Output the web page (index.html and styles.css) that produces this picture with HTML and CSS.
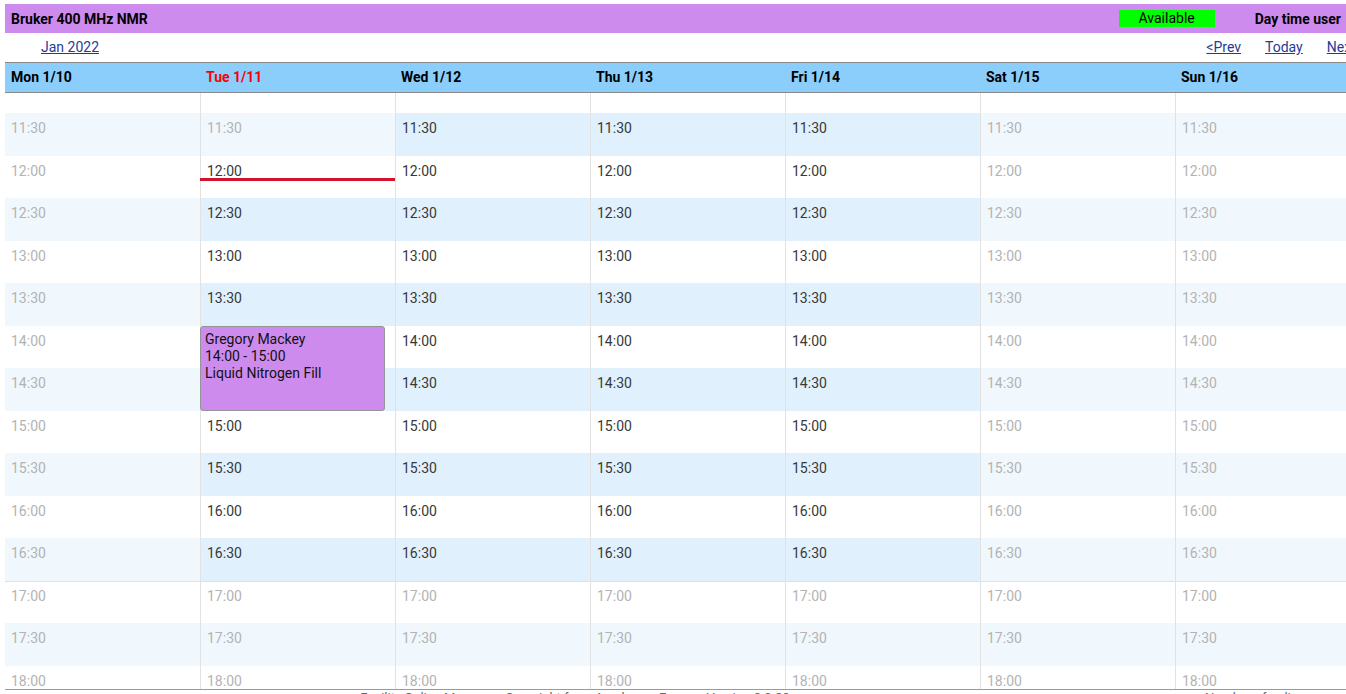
FILE: index.html
```html
<!DOCTYPE html>
<html>
<head>
<meta charset="utf-8">
<title>Bruker 400 MHz NMR</title>
<link rel="stylesheet" href="styles.css">
</head>
<body>
<div class="page">
  <div class="topbar">
    <div class="title">Bruker 400 MHz NMR</div>
    <div class="status">Available</div>
    <div class="usertype">Day time user</div>
  </div>
  <div class="nav">
    <a href="#" class="month">Jan 2022</a>
    <div class="navlinks">
      <a href="#">&lt;Prev</a>
      <a href="#">Today</a>
      <a href="#">Next&gt;</a>
    </div>
  </div>
  <div class="dayheads">
    <div class="dayhead">Mon 1/10</div>
    <div class="dayhead today">Tue 1/11</div>
    <div class="dayhead">Wed 1/12</div>
    <div class="dayhead">Thu 1/13</div>
    <div class="dayhead">Fri 1/14</div>
    <div class="dayhead">Sat 1/15</div>
    <div class="dayhead">Sun 1/16</div>
  </div>
  <div class="grid">
    <!-- Mon -->
    <div class="col first">
      <div class="slot tail"></div>
      <div class="slot half off">11:30</div>
      <div class="slot off">12:00</div>
      <div class="slot half off">12:30</div>
      <div class="slot off">13:00</div>
      <div class="slot half off">13:30</div>
      <div class="slot off">14:00</div>
      <div class="slot half off">14:30</div>
      <div class="slot off">15:00</div>
      <div class="slot half off">15:30</div>
      <div class="slot off">16:00</div>
      <div class="slot half off">16:30</div>
      <div class="slot off sep">17:00</div>
      <div class="slot half off">17:30</div>
      <div class="slot off">18:00</div>
    </div>
    <!-- Tue -->
    <div class="col">
      <div class="slot tail"></div>
      <div class="slot half off">11:30</div>
      <div class="slot on">12:00</div>
      <div class="slot half on">12:30</div>
      <div class="slot on">13:00</div>
      <div class="slot half on">13:30</div>
      <div class="slot on">14:00</div>
      <div class="slot half on">14:30</div>
      <div class="slot on">15:00</div>
      <div class="slot half on">15:30</div>
      <div class="slot on">16:00</div>
      <div class="slot half on">16:30</div>
      <div class="slot off sep">17:00</div>
      <div class="slot half off">17:30</div>
      <div class="slot off">18:00</div>
      <div class="nowline"></div>
      <div class="event">
        <div class="evline">Gregory Mackey</div>
        <div class="evline">14:00 - 15:00</div>
        <div class="evline">Liquid Nitrogen Fill</div>
      </div>
    </div>
    <!-- Wed -->
    <div class="col">
      <div class="slot tail"></div>
      <div class="slot half on">11:30</div>
      <div class="slot on">12:00</div>
      <div class="slot half on">12:30</div>
      <div class="slot on">13:00</div>
      <div class="slot half on">13:30</div>
      <div class="slot on">14:00</div>
      <div class="slot half on">14:30</div>
      <div class="slot on">15:00</div>
      <div class="slot half on">15:30</div>
      <div class="slot on">16:00</div>
      <div class="slot half on">16:30</div>
      <div class="slot off sep">17:00</div>
      <div class="slot half off">17:30</div>
      <div class="slot off">18:00</div>
    </div>
    <!-- Thu -->
    <div class="col">
      <div class="slot tail"></div>
      <div class="slot half on">11:30</div>
      <div class="slot on">12:00</div>
      <div class="slot half on">12:30</div>
      <div class="slot on">13:00</div>
      <div class="slot half on">13:30</div>
      <div class="slot on">14:00</div>
      <div class="slot half on">14:30</div>
      <div class="slot on">15:00</div>
      <div class="slot half on">15:30</div>
      <div class="slot on">16:00</div>
      <div class="slot half on">16:30</div>
      <div class="slot off sep">17:00</div>
      <div class="slot half off">17:30</div>
      <div class="slot off">18:00</div>
    </div>
    <!-- Fri -->
    <div class="col">
      <div class="slot tail"></div>
      <div class="slot half on">11:30</div>
      <div class="slot on">12:00</div>
      <div class="slot half on">12:30</div>
      <div class="slot on">13:00</div>
      <div class="slot half on">13:30</div>
      <div class="slot on">14:00</div>
      <div class="slot half on">14:30</div>
      <div class="slot on">15:00</div>
      <div class="slot half on">15:30</div>
      <div class="slot on">16:00</div>
      <div class="slot half on">16:30</div>
      <div class="slot off sep">17:00</div>
      <div class="slot half off">17:30</div>
      <div class="slot off">18:00</div>
    </div>
    <!-- Sat -->
    <div class="col">
      <div class="slot tail"></div>
      <div class="slot half off">11:30</div>
      <div class="slot off">12:00</div>
      <div class="slot half off">12:30</div>
      <div class="slot off">13:00</div>
      <div class="slot half off">13:30</div>
      <div class="slot off">14:00</div>
      <div class="slot half off">14:30</div>
      <div class="slot off">15:00</div>
      <div class="slot half off">15:30</div>
      <div class="slot off">16:00</div>
      <div class="slot half off">16:30</div>
      <div class="slot off sep">17:00</div>
      <div class="slot half off">17:30</div>
      <div class="slot off">18:00</div>
    </div>
    <!-- Sun -->
    <div class="col">
      <div class="slot tail"></div>
      <div class="slot half off">11:30</div>
      <div class="slot off">12:00</div>
      <div class="slot half off">12:30</div>
      <div class="slot off">13:00</div>
      <div class="slot half off">13:30</div>
      <div class="slot off">14:00</div>
      <div class="slot half off">14:30</div>
      <div class="slot off">15:00</div>
      <div class="slot half off">15:30</div>
      <div class="slot off">16:00</div>
      <div class="slot half off">16:30</div>
      <div class="slot off sep">17:00</div>
      <div class="slot half off">17:30</div>
      <div class="slot off">18:00</div>
    </div>
  </div>
  <div class="footer">
    <div class="footmain">Facility Online Manager - Copyright from Academy - Forum - Version 2.0.22</div>
    <div class="footside">Number of online users</div>
  </div>
</div>
</body>
</html>
```

FILE: styles.css
```css
html, body {
  margin: 0;
  padding: 0;
  overflow: hidden;
  background: #fff;
}
body {
  font-family: Roboto, "Liberation Sans", Arial, sans-serif;
  font-size: 14px;
  color: #000;
}
.page {
  width: 1365px;
  padding: 4px 0 0 5px;
}
.topbar {
  height: 29px;
  background: #ce8bee;
  display: flex;
  align-items: center;
}
.title {
  font-weight: bold;
  padding-left: 6px;
  flex: 1;
}
.status {
  width: 96px;
  height: 17px;
  line-height: 17px;
  background: #00ff00;
  text-align: center;
  color: #000;
}
.usertype {
  font-weight: bold;
  margin-left: 40px;
  padding-right: 29px;
}
.nav {
  height: 29px;
  display: flex;
  align-items: center;
  justify-content: space-between;
}
.nav a {
  color: #1f3b95;
  text-decoration: underline;
  line-height: 27px;
}
.month {
  margin-left: 36px;
}
.navlinks {
  display: flex;
  gap: 24px;
  padding-right: 7px;
}
.dayheads {
  display: flex;
  background: #8bcdfb;
  border-top: 1px solid #8a8a8a;
  border-bottom: 1px solid #8a8a8a;
  height: 29px;
}
.dayhead {
  width: 195px;
  box-sizing: border-box;
  padding-left: 6px;
  font-weight: bold;
  line-height: 29px;
}
.dayhead.today {
  color: #ff0000;
}
.grid {
  display: flex;
  height: 596px;
  overflow: hidden;
  border-bottom: 1px solid #9a9a9a;
}
.col {
  width: 195px;
  box-sizing: border-box;
  border-left: 1px solid #e2e2e2;
  position: relative;
  flex: none;
}
.col.first {
  border-left: none;
}
.slot {
  height: 42.5px;
  box-sizing: border-box;
  padding: 7px 0 0 6px;
  line-height: 16px;
  background: #fff;
}
.slot.tail {
  height: 20px;
  padding: 0;
}
.slot.on {
  color: #383838;
}
.slot.off {
  color: #b3b3b3;
}
.slot.half.on {
  background: #e1f0fd;
}
.slot.half.off {
  background: #f0f8fe;
}
.slot.sep {
  border-top: 1px solid #cfe5fa;
  padding-top: 6px;
}
.nowline {
  position: absolute;
  left: -1px;
  right: 0;
  top: 85px;
  height: 3px;
  background: #d3122b;
}
.event {
  position: absolute;
  left: -1px;
  top: 233px;
  width: 185px;
  height: 85px;
  box-sizing: border-box;
  background: #ce8bee;
  border: 1px solid #959595;
  border-radius: 3px;
  padding: 4px 0 0 4px;
  color: #111;
}
.evline {
  line-height: 17px;
  height: 17px;
}
.footer {
  display: flex;
  color: #666;
  font-size: 13px;
  line-height: 16px;
}
.footmain {
  width: 1140px;
  text-align: center;
}
.footside {
  flex: 1;
  padding-left: 60px;
}
```
